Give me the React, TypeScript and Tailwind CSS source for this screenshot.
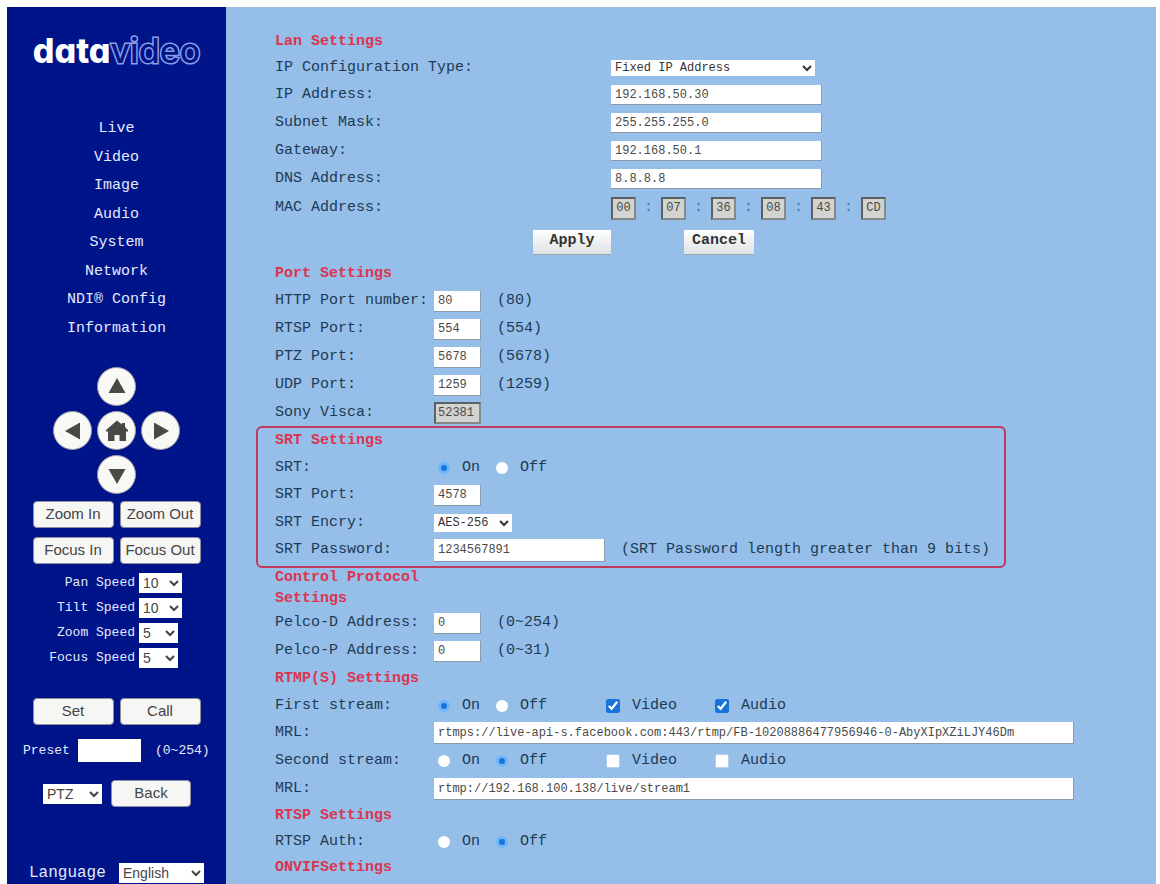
import {ReactNode} from 'react';
import clsx from 'clsx';

const navItems = ['Live', 'Video', 'Image', 'Audio', 'System', 'Network', 'NDI® Config', 'Information'];

const lanFields = [
    {id: 'ip', label: 'IP Address:', value: '192.168.50.30'},
    {id: 'mask', label: 'Subnet Mask:', value: '255.255.255.0'},
    {id: 'gateway', label: 'Gateway:', value: '192.168.50.1'},
    {id: 'dns', label: 'DNS Address:', value: '8.8.8.8'},
];

const macParts = ['00', '07', '36', '08', '43', 'CD'];

const portFields = [
    {id: 'http', label: 'HTTP Port number:', value: '80', hint: '(80)'},
    {id: 'rtsp', label: 'RTSP Port:', value: '554', hint: '(554)'},
    {id: 'ptz', label: 'PTZ Port:', value: '5678', hint: '(5678)'},
    {id: 'udp', label: 'UDP Port:', value: '1259', hint: '(1259)'},
];

const speeds = [
    {id: 'pan', label: 'Pan Speed', value: '10'},
    {id: 'tilt', label: 'Tilt Speed', value: '10'},
    {id: 'zoom', label: 'Zoom Speed', value: '5'},
    {id: 'focus', label: 'Focus Speed', value: '5'},
];

const field = 'bg-white border-r border-b border-[#8a9aa8] px-1 text-xs text-[#4a4a4a] outline-none';
const lockedField = 'bg-[#d3d3cf] border-2 border-[#85898c] border-t-[#5b6066] border-l-[#5b6066] text-xs text-[#4a4a4a] outline-none';


function Heading({children, className = 'h-[26px]'}: {children: ReactNode; className?: string}) {
    return (
        <h2 className={clsx('flex items-center font-bold text-[#dc3450]', className)}>{children}</h2>
    );
}

function Row({label, htmlFor, children, className = 'h-7', wide}: {
    label: string;
    htmlFor?: string;
    children: ReactNode;
    className?: string;
    wide?: boolean;
}) {
    return (
        <div className={clsx('flex items-center', className)}>
            <label htmlFor={htmlFor} className={clsx('shrink-0', wide ? 'w-[336px]' : 'w-[159px]')}>{label}</label>
            {children}
        </div>
    );
}

function OnOff({name, on}: {name: string; on: boolean}) {
    const radio = 'appearance-none size-3 rounded-full bg-white checked:border-[3px] checked:border-[#6fb6f8] checked:bg-[#1673dc]';

    return (
        <div className="flex pl-1 w-[172px]">
            <label className="flex items-center gap-3 w-[58px]">
                <input type="radio" name={name} defaultChecked={on} className={radio} />
                On
            </label>
            <label className="flex items-center gap-3">
                <input type="radio" name={name} defaultChecked={!on} className={radio} />
                Off
            </label>
        </div>
    );
}

function Check({label, checked}: {label: string; checked: boolean}) {
    return (
        <label className="flex items-center gap-3 w-[109px]">
            <input
                type="checkbox"
                defaultChecked={checked}
                className="size-[14px] accent-[#1673dc] not-checked:appearance-none not-checked:rounded-xs not-checked:border not-checked:border-[#b4cfea] not-checked:bg-white"
            />
            {label}
        </label>
    );
}

function PadButton({label, path, className}: {label: string; path: string; className?: string}) {
    return (
        <button
            aria-label={label}
            className={clsx('size-[39px] rounded-full bg-[#f8f8f4] border border-[#9a9aa8] flex items-center justify-center', className)}
        >
            <svg viewBox="0 0 24 24" className="size-6 fill-[#484844]">
                <path d={path} />
            </svg>
        </button>
    );
}

function SideButton({children, className = 'w-[81px]'}: {children: ReactNode; className?: string}) {
    return (
        <button
            className={clsx(
                'h-[27px] rounded bg-[#f6f6f4] border border-[#8e8e9c] font-[Liberation_Sans,sans-serif] text-[15px] text-[#444] whitespace-nowrap',
                className,
            )}
        >
            {children}
        </button>
    );
}

function Sidebar() {
    const select = 'h-5 bg-white font-[Liberation_Sans,sans-serif] text-sm text-[#444]';

    return (
        <aside className="w-[219px] shrink-0 bg-[#001489] text-[#e4eaff]">
            <div
                aria-label="datavideo"
                className="h-[108px] pt-5 text-center font-[Inter,sans-serif] text-[34px] leading-[48px] [font-feature-settings:'cv11'] whitespace-nowrap"
            >
                <span className="font-extrabold text-white">data</span>
                <span className="font-medium text-[#001489] [-webkit-text-stroke:3px_#8c9ee6] [paint-order:stroke_fill]">video</span>
            </div>

            <nav className="h-[228px] flex flex-col items-center justify-between text-[15px]">
                {navItems.map((item) => (
                    <a key={item} href="#" className="leading-7">{item}</a>
                ))}
            </nav>

            <div className="mt-6 mx-auto w-max grid grid-cols-3 gap-[5px]">
                <PadButton label="Up" path="M12 3 L20.5 18 H3.5 Z" className="col-start-2" />
                <PadButton label="Left" path="M4 12 L19 3.5 V20.5 Z" className="col-start-1" />
                <PadButton label="Home" path="M12 1.5 L17 5.5 V4 H20 V8 L23 11 V12.5 H21 V22 H14.5 V16 H9.5 V22 H3 V12.5 H1 V11 Z" />
                <PadButton label="Right" path="M20 12 L5 3.5 V20.5 Z" />
                <PadButton label="Down" path="M12 21 L3.5 6 H20.5 Z" className="col-start-2" />
            </div>

            <div className="mt-[7px] mx-auto w-max grid grid-cols-2 gap-x-1.5 gap-y-[9px]">
                <SideButton>Zoom In</SideButton>
                <SideButton>Zoom Out</SideButton>
                <SideButton>Focus In</SideButton>
                <SideButton>Focus Out</SideButton>
            </div>

            <div className="mt-1.5 text-[13px]">
                {speeds.map((speed) => (
                    <div key={speed.id} className="h-[25px] flex items-center gap-1">
                        <label htmlFor={speed.id} className="w-32 text-right">{speed.label}</label>
                        <select id={speed.id} className={clsx(select, speed.value.length > 1 ? 'w-[43px]' : 'w-[39px]')}>
                            <option>{speed.value}</option>
                        </select>
                    </div>
                ))}
            </div>

            <div className="mt-7 flex justify-center gap-1.5">
                <SideButton>Set</SideButton>
                <SideButton>Call</SideButton>
            </div>

            <div className="mt-3.5 pl-4 flex items-center text-[13px]">
                <label htmlFor="preset" className="w-[55px]">Preset</label>
                <input id="preset" className="w-[63px] h-[23px] bg-white px-1 text-black" />
                <span className="pl-3.5">(0~254)</span>
            </div>

            <div className="mt-[18px] pl-9 flex items-center gap-[9px]">
                <select aria-label="Mode" className={clsx(select, 'w-[59px]')}>
                    <option>PTZ</option>
                </select>
                <SideButton className="w-20">Back</SideButton>
            </div>

            <div className="mt-14 pl-[22px] flex items-center text-base leading-5">
                <label htmlFor="language" className="w-[90px]">Language</label>
                <select id="language" className={clsx(select, 'w-[85px]')}>
                    <option>English</option>
                </select>
            </div>
        </aside>
    );
}

export default function App() {
    const action = 'h-[25px] bg-linear-to-b from-white to-[#dfe2e4] border-b border-[#9aa6b2] font-bold text-[#333]';

    return (
        <div className="h-screen overflow-hidden flex pt-[7px] pl-[7px] pr-1 bg-[#fdfffc] font-[Liberation_Mono,monospace]">
            <Sidebar />

            <main className="grow min-w-0 bg-[#95bfe8] border-t border-r border-[#a3b6dc] pt-[21px] pl-[49px] pr-20 text-[15px] text-[#1d3a55]">
                <section>
                    <Heading>Lan Settings</Heading>
                    <Row label="IP Configuration Type:" htmlFor="type" className="h-[26px]" wide>
                        <select id="type" className="w-[204px] h-4 bg-white text-xs text-[#333]">
                            <option>Fixed IP Address</option>
                        </select>
                    </Row>
                    {lanFields.map((item) => (
                        <Row key={item.id} label={item.label} htmlFor={item.id} wide>
                            <input id={item.id} defaultValue={item.value} className={clsx(field, 'w-[211px] h-5')} />
                        </Row>
                    ))}
                    <Row label="MAC Address:" htmlFor="mac-0" className="h-[30px]" wide>
                        {macParts.map((part, i) => (
                            <div key={i} className="flex items-center">
                                {i > 0 && <span className="w-[25px] text-center text-[#2f78c4]">:</span>}
                                <input
                                    id={`mac-${i}`}
                                    aria-label={`MAC ${i + 1}`}
                                    readOnly
                                    value={part}
                                    className={clsx(lockedField, 'w-[25px] h-[23px] text-center')}
                                />
                            </div>
                        ))}
                    </Row>
                    <div className="h-[38px] pl-[258px] flex items-center gap-[73px]">
                        <button className={clsx(action, 'w-[78px]')}>Apply</button>
                        <button className={clsx(action, 'w-[70px]')}>Cancel</button>
                    </div>
                </section>

                <section>
                    <Heading>Port Settings</Heading>
                    {portFields.map((item) => (
                        <Row key={item.id} label={item.label} htmlFor={`port-${item.id}`}>
                            <input id={`port-${item.id}`} defaultValue={item.value} className={clsx(field, 'w-[47px] h-[21px]')} />
                            <span className="pl-4">{item.hint}</span>
                        </Row>
                    ))}
                    <Row label="Sony Visca:" htmlFor="visca">
                        <input id="visca" readOnly value="52381" className={clsx(lockedField, 'w-[47px] h-[22px] px-0.5')} />
                    </Row>
                </section>

                <section className="relative">
                    <div className="absolute -left-[19px] -top-px w-[750px] h-[142px] rounded-md border-2 border-[#c0395c] pointer-events-none" />
                    <Heading className="h-7">SRT Settings</Heading>
                    <Row label="SRT:" className="h-[26px]">
                        <OnOff name="srt" on />
                    </Row>
                    <Row label="SRT Port:" htmlFor="srt-port">
                        <input id="srt-port" defaultValue="4578" className={clsx(field, 'w-[47px] h-[21px]')} />
                    </Row>
                    <Row label="SRT Encry:" htmlFor="srt-encry">
                        <select id="srt-encry" className="w-[78px] h-[18px] bg-white text-xs text-[#333]">
                            <option>AES-256</option>
                        </select>
                    </Row>
                    <Row label="SRT Password:" htmlFor="srt-password" className="h-[26px]">
                        <input id="srt-password" defaultValue="1234567891" className={clsx(field, 'w-[171px] h-[23px]')} />
                        <span className="pl-4">(SRT Password length greater than 9 bits)</span>
                    </Row>
                </section>

                <section>
                    <Heading className="h-[46px] pt-1 w-[159px] leading-[21px]">Control Protocol Settings</Heading>
                    <Row label="Pelco-D Address:" htmlFor="pelco-d">
                        <input id="pelco-d" defaultValue="0" className={clsx(field, 'w-[47px] h-[21px]')} />
                        <span className="pl-4">(0~254)</span>
                    </Row>
                    <Row label="Pelco-P Address:" htmlFor="pelco-p">
                        <input id="pelco-p" defaultValue="0" className={clsx(field, 'w-[47px] h-[21px]')} />
                        <span className="pl-4">(0~31)</span>
                    </Row>
                </section>

                <section>
                    <Heading className="h-7">RTMP(S) Settings</Heading>
                    <Row label="First stream:" className="h-[26px]">
                        <OnOff name="first" on />
                        <Check label="Video" checked />
                        <Check label="Audio" checked />
                    </Row>
                    <Row label="MRL:" htmlFor="mrl-1">
                        <input
                            id="mrl-1"
                            defaultValue="rtmps://live-api-s.facebook.com:443/rtmp/FB-10208886477956946-0-AbyXIpXZiLJY46Dm"
                            className={clsx(field, 'w-full max-w-[640px] h-[22px]')}
                        />
                    </Row>
                    <Row label="Second stream:">
                        <OnOff name="second" on={false} />
                        <Check label="Video" checked={false} />
                        <Check label="Audio" checked={false} />
                    </Row>
                    <Row label="MRL:" htmlFor="mrl-2">
                        <input
                            id="mrl-2"
                            defaultValue="rtmp://192.168.100.138/live/stream1"
                            className={clsx(field, 'w-full max-w-[640px] h-[22px]')}
                        />
                    </Row>
                </section>

                <section>
                    <Heading>RTSP Settings</Heading>
                    <Row label="RTSP Auth:" className="h-[26px]">
                        <OnOff name="auth" on={false} />
                    </Row>
                    <Heading>ONVIFSettings</Heading>
                </section>
            </main>
        </div>
    );
}
